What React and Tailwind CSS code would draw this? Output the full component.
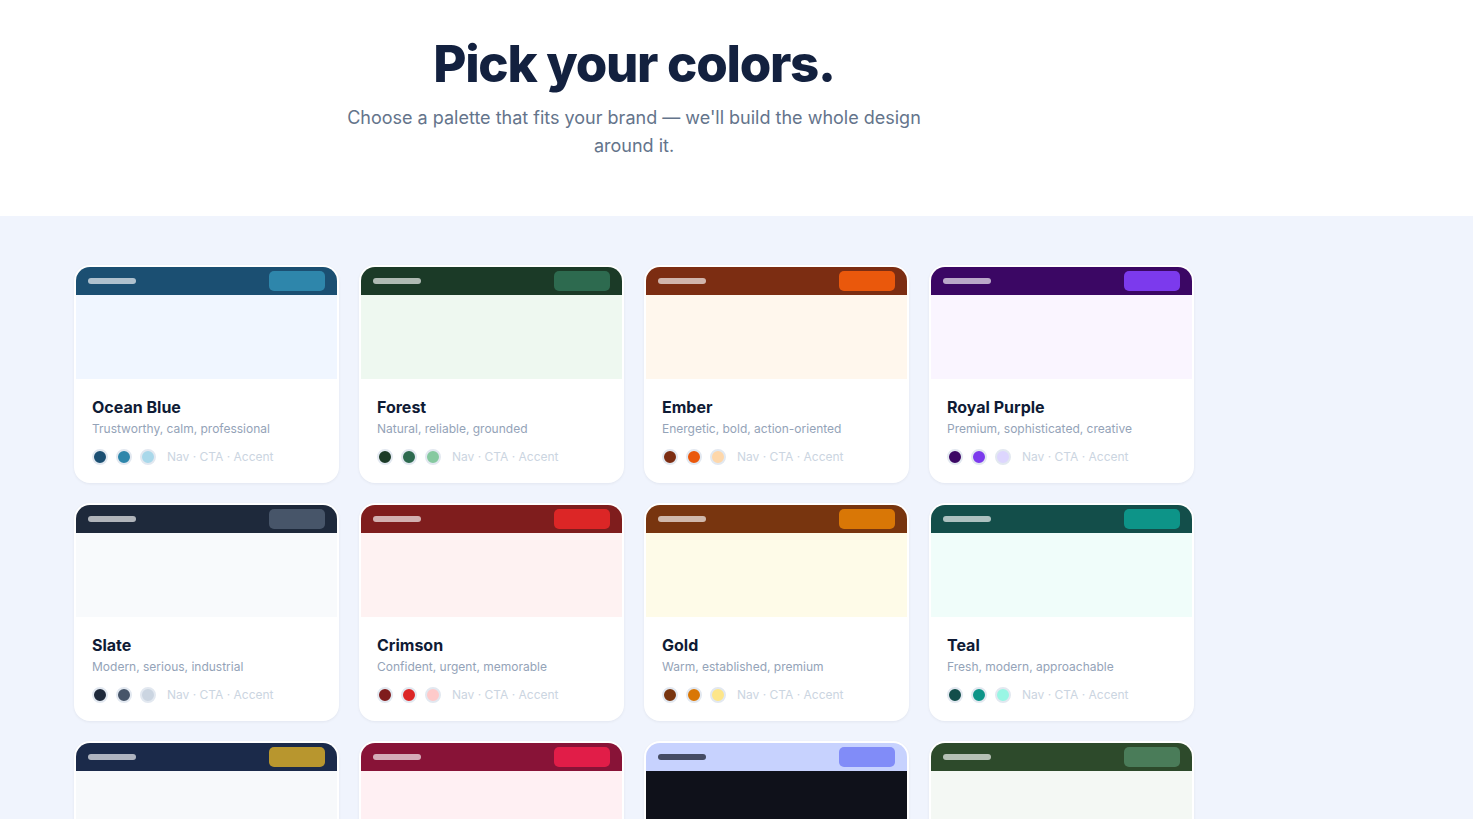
const PALETTES = [
  { name: 'Ocean Blue', desc: 'Trustworthy, calm, professional', nav: '#1b4f72', cta: '#2e86ab', bg: '#f0f6ff', accent: '#a9d8ea', line: 'rgba(255,255,255,0.65)' },
  { name: 'Forest', desc: 'Natural, reliable, grounded', nav: '#1b3a27', cta: '#2d6a4f', bg: '#eef8f0', accent: '#86c9a0', line: 'rgba(255,255,255,0.65)' },
  { name: 'Ember', desc: 'Energetic, bold, action-oriented', nav: '#7c2d12', cta: '#ea580c', bg: '#fff7ed', accent: '#fed7aa', line: 'rgba(255,255,255,0.65)' },
  { name: 'Royal Purple', desc: 'Premium, sophisticated, creative', nav: '#3b0764', cta: '#7c3aed', bg: '#faf5ff', accent: '#ddd6fe', line: 'rgba(255,255,255,0.65)' },
  { name: 'Slate', desc: 'Modern, serious, industrial', nav: '#1e293b', cta: '#475569', bg: '#f8fafc', accent: '#cbd5e1', line: 'rgba(255,255,255,0.65)' },
  { name: 'Crimson', desc: 'Confident, urgent, memorable', nav: '#7f1d1d', cta: '#dc2626', bg: '#fef2f2', accent: '#fecaca', line: 'rgba(255,255,255,0.65)' },
  { name: 'Gold', desc: 'Warm, established, premium', nav: '#78350f', cta: '#d97706', bg: '#fefbe8', accent: '#fde68a', line: 'rgba(255,255,255,0.65)' },
  { name: 'Teal', desc: 'Fresh, modern, approachable', nav: '#134e4a', cta: '#0d9488', bg: '#f0fdfa', accent: '#99f6e4', line: 'rgba(255,255,255,0.65)' },
  { name: 'Navy & Gold', desc: 'Classic, trusted, refined', nav: '#1b2a4a', cta: '#b8962e', bg: '#f7f9fb', accent: '#e9d8a6', line: 'rgba(255,255,255,0.65)' },
  { name: 'Rose', desc: 'Bold, passionate, vibrant', nav: '#881337', cta: '#e11d48', bg: '#fff0f3', accent: '#fecdd3', line: 'rgba(255,255,255,0.65)' },
  { name: 'Midnight', desc: 'Dark, sleek, technical', nav: '#c7d2fe', cta: '#818cf8', bg: '#0f111a', accent: '#a5b4fc', line: '#454b63' },
  { name: 'Sage', desc: 'Organic, gentle, balanced', nav: '#2d4a2b', cta: '#4a7c59', bg: '#f4f8f4', accent: '#b7d3b0', line: 'rgba(255,255,255,0.65)' },
];

function Dot({ color }) {
  return <span className="w-4 h-4 rounded-full border-2 border-[#e2e8f0]" style={{ background: color }} />;
}

function PaletteCard({ p }) {
  return (
    <div className="bg-white rounded-2xl border-2 border-white overflow-hidden shadow-[0_1px_3px_rgba(15,23,42,0.06)]">
      <div className="h-7 px-3 flex items-center justify-between" style={{ background: p.nav }}>
        <span className="w-12 h-1.5 rounded-full" style={{ background: p.line }} />
        <span className="w-14 h-5 rounded-[5px]" style={{ background: p.cta }} />
      </div>
      <div className="h-[84px]" style={{ background: p.bg }} />
      <div className="p-4">
        <h3 className="text-base leading-6 font-bold text-[#0f1b35]">{p.name}</h3>
        <p className="text-xs leading-5 text-[#94a3b8]">{p.desc}</p>
        <div className="flex items-center gap-2 mt-2.5">
          <Dot color={p.nav} />
          <Dot color={p.cta} />
          <Dot color={p.accent} />
          <span className="ml-[3px] text-xs text-[#cbd5e1]">Nav · CTA · Accent</span>
        </div>
      </div>
    </div>
  );
}

export default function App() {
  return (
    <div className="min-h-screen bg-[#f0f4fd] font-['Inter','Noto_Sans',sans-serif]">
      <header className="bg-white pt-10 pb-14">
        <div className="ml-[74px] w-[1120px] text-center">
          <h1 className="text-[51px] leading-[48px] font-extrabold tracking-tight text-[#13213f]">Pick your colors.</h1>
          <p className="mt-4 mx-auto max-w-[580px] text-lg leading-7 text-[#64748b]">
            Choose a palette that fits your brand — we'll build the whole design around it.
          </p>
        </div>
      </header>

      <section className="pt-[49px] pb-16">
        <div className="ml-[74px] w-[1120px] grid grid-cols-4 gap-x-5 gap-y-5">
          {PALETTES.map(p => (
            <PaletteCard key={p.name} p={p} />
          ))}
        </div>
      </section>
    </div>
  );
}
